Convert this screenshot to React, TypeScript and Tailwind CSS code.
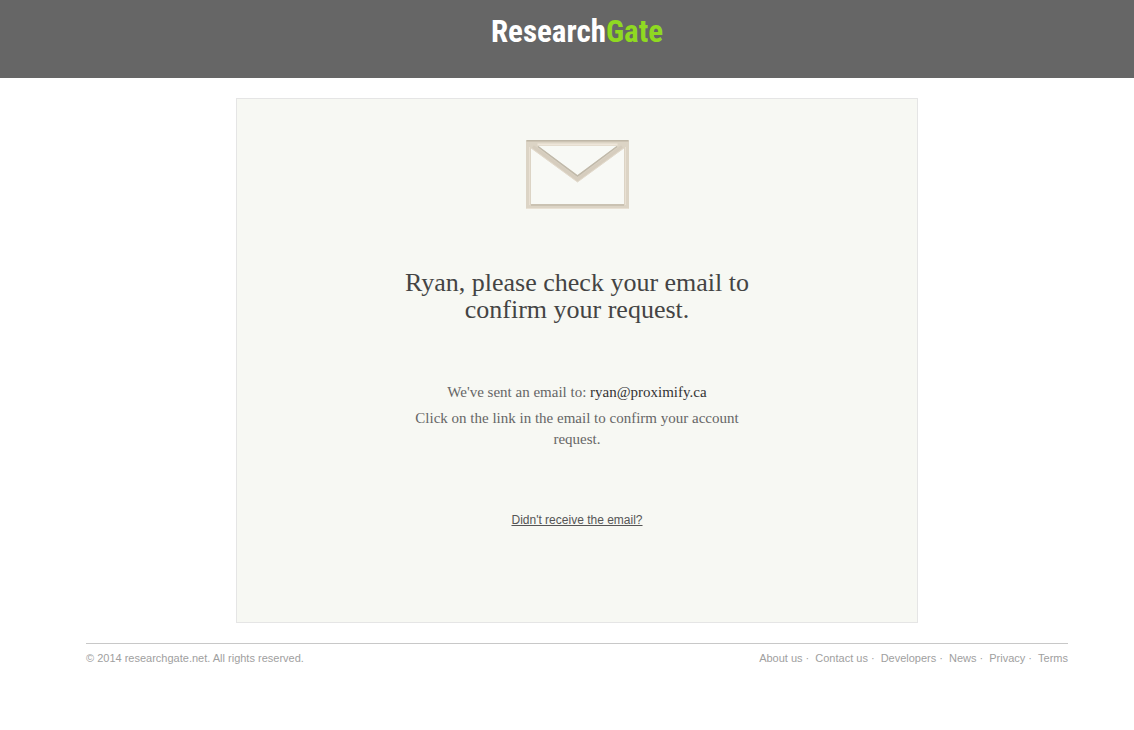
const footerLinks = ['About us', 'Contact us', 'Developers', 'News', 'Privacy', 'Terms'];

function Envelope() {
  return (
    <svg className="block h-[69px] w-[104px]" viewBox="0 0 104 69" fill="none" aria-hidden="true">
      <rect x="1" width="103" height="69" rx="1" fill="#dcd4c5" />
      <path d="M1.5 0.500h102" stroke="#bfb7a7" />
      <path d="M1.500 1.500h102" stroke="#cdc4b4" />
      <path d="M4.500 7v58M100.500 7v58" stroke="#e9e0d2" />
      <path d="M6 8 52.500 42 99 8v57H6z" fill="#f8f9f5" />
      <path d="M6 64h93v2H6z" fill="#cac2b2" />
      <path d="M6 8 52.500 42 99 8" stroke="#e2d9cb" />
      <path d="M8 6.500 52.500 39.500 97 6.500" stroke="#d6cdbe" strokeWidth="3" />
      <path d="M13 6h79L52.500 35z" fill="#f8f9f5" />
      <path d="M12.500 4.500h80" stroke="#eee6da" strokeWidth="2" />
      <path d="M13 6.500 52.500 36 92 6.500" stroke="#c0b9aa" strokeWidth="1.500" />
      <path d="M1.500 68.500h102" stroke="#e9e1d4" />
    </svg>
  );
}

export default function App() {
  return (
    <div className="min-h-screen bg-white font-['Liberation_Sans',Arial,sans-serif]">
      <header className="flex h-[78px] justify-center bg-[#666666] pt-3 pl-5">
        <a
          href="#"
          className="h-10 font-['Roboto_Condensed','Arial_Narrow',Roboto,sans-serif] text-[31px] leading-10 font-bold text-white"
        >
          Research<span className="text-[#8fd921]">Gate</span>
        </a>
      </header>
      <div className="pt-5 pl-5">
        <main className="mx-auto flex w-full max-w-[682px] flex-col items-center border border-[#e5e5e5] bg-[#f7f8f3] px-6 pt-[41px] pb-[93px] text-center font-['Liberation_Serif',Georgia,serif]">
          <Envelope />
          <h1 className="mt-[60px] max-w-[360px] text-[26px] leading-[27px] text-[#444444]">
            Ryan, please check your email to confirm your request.
          </h1>
          <p className="mt-[59px] text-[15px] leading-[21px] text-[#666666]">
            We've sent an email to: <span className="text-[#333333]">ryan@proximify.ca</span>
          </p>
          <p className="mt-[5px] max-w-[350px] text-[15px] leading-[21px] text-[#666666]">
            Click on the link in the email to confirm your account request.
          </p>
          <a
            href="#"
            className="mt-[61px] font-['Liberation_Sans',Arial,sans-serif] text-[12px] leading-[18px] text-[#555555] underline"
          >
            Didn't receive the email?
          </a>
        </main>
        <footer className="mx-auto mt-5 flex w-full max-w-[982px] flex-wrap justify-between gap-x-6 border-t border-[#c8c8c8] pt-[6px] text-[11px] leading-4 text-[#a0a0a0]">
          <p>© 2014 researchgate.net. All rights reserved.</p>
          <nav aria-label="Footer">
            <ul className="flex flex-wrap gap-x-[6px]">
              {footerLinks.map((label, index) => (
                <li key={label}>
                  <a href="#">{label}</a>
                  {index < footerLinks.length - 1 && ' ·'}
                </li>
              ))}
            </ul>
          </nav>
        </footer>
      </div>
    </div>
  );
}
